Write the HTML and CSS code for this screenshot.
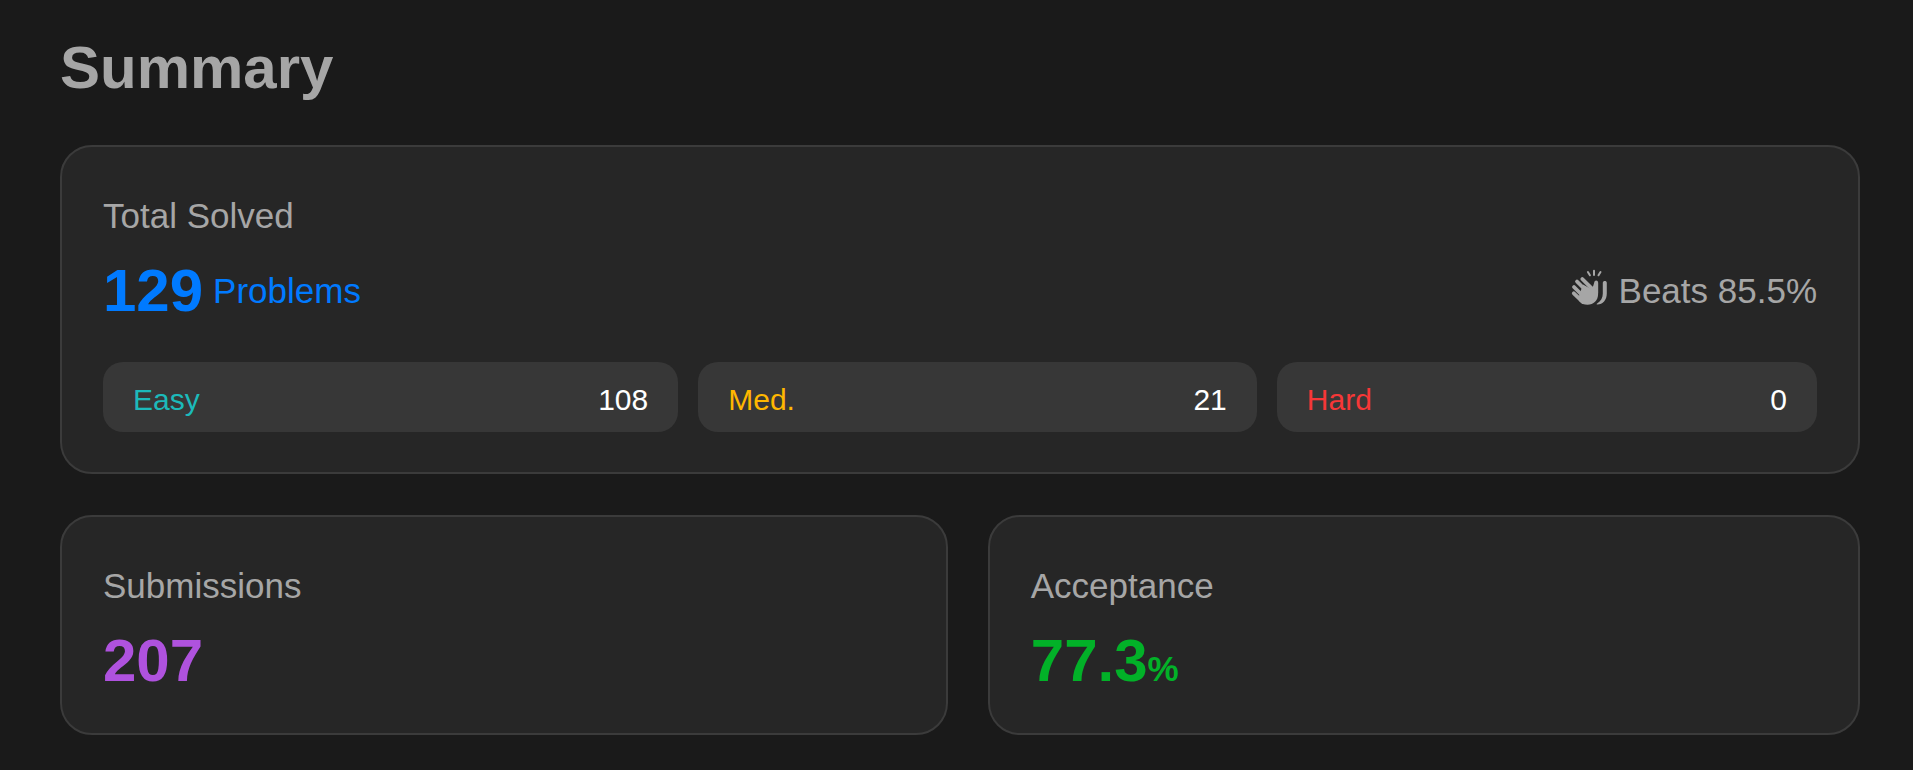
FILE: index.html
```html
<!DOCTYPE html>
<html lang="en">
<head>
<meta charset="utf-8">
<title>Summary</title>
<link rel="stylesheet" href="styles.css">
</head>
<body>
<main class="page">
  <h1 class="title">Summary</h1>
  <section class="card">
    <h2 class="label">Total Solved</h2>
    <div class="total">
      <p class="value solved">129 <span class="unit">Problems</span></p>
      <p class="beats">
        <svg class="clap" viewBox="0 0 40 44" aria-hidden="true">
          <g fill="none" stroke="currentColor" stroke-linecap="round">
            <path stroke-width="2" d="M25 1.800v4.200M18.900 3l2 3.300M31.500 3l-2 3.300"/>
            <path stroke-width="3.800" d="M13.300 10L24 20.700M8 12.500L19 23.500M5 18L16 29M4.800 24.300L14 33M27.200 13.500V24"/>
          </g>
          <path fill="currentColor" d="M14 15.500l9 5 2.300-7h3.800V25c0 6.500-4.500 10.800-10.600 10.800-3.600 0-6-1.300-8-3.300l-1.500-2.500 3-9z"/>
          <path fill="currentColor" d="M33.800 14c0-2.600 4-2.600 4 0v10.500c0 6.500-4 11-9.500 11-.8 0-.8-.6-.2-1 3.800-2.400 5.700-5.500 5.700-10z"/>
        </svg>
        <span>Beats 85.5%</span>
      </p>
    </div>
    <dl class="levels">
      <div class="level"><dt class="easy">Easy</dt><dd>108</dd></div>
      <div class="level"><dt class="medium">Med.</dt><dd>21</dd></div>
      <div class="level"><dt class="hard">Hard</dt><dd>0</dd></div>
    </dl>
  </section>
  <div class="row">
    <section class="card">
      <h2 class="label">Submissions</h2>
      <p class="value submissions">207</p>
    </section>
    <section class="card">
      <h2 class="label">Acceptance</h2>
      <p class="value acceptance">77.3<span class="percent">%</span></p>
    </section>
  </div>
</main>
</body>
</html>
```

FILE: styles.css
```css
* {
  box-sizing: border-box;
}

body {
  margin: 0;
  background: #1a1a1a;
  color: #a6a6a6;
  font-family: "Liberation Sans", Arial, sans-serif;
}

h1, h2, p, dl, dd {
  margin: 0;
}

.page {
  display: flex;
  flex-direction: column;
  gap: 41px;
  padding: 32px 53px 35px 60px;
}

.title {
  font-size: 60px;
  line-height: 72px;
}

.card {
  padding: 40px 41px;
  background: #262626;
  border: 2px solid #3b3b3b;
  border-radius: 32px;
}

.label {
  margin-bottom: 14px;
  font-size: 35px;
  font-weight: 400;
  line-height: 58px;
}

.total {
  display: flex;
  flex-wrap: wrap;
  align-items: center;
  justify-content: space-between;
  margin-bottom: 39px;
}

.value {
  font-size: 60px;
  font-weight: 700;
  line-height: 64px;
}

.solved {
  display: flex;
  align-items: center;
  gap: 10px;
  color: #007aff;
}

.unit {
  font-size: 35px;
  font-weight: 400;
}

.beats {
  display: flex;
  align-items: center;
  gap: 10px;
  font-size: 35px;
}

.clap {
  width: 40px;
  height: 44px;
}

.levels {
  display: flex;
  flex-wrap: wrap;
  gap: 20px;
}

.level {
  display: flex;
  flex: 1 1 auto;
  justify-content: space-between;
  padding: 6px 30px 0;
  background: #373737;
  border-radius: 20px;
  font-size: 30px;
  line-height: 64px;
}

.level dd {
  color: #fff;
}

.easy {
  color: #1cbaba;
}

.medium {
  color: #ffb700;
}

.hard {
  color: #f63737;
}

.row {
  display: flex;
  flex-wrap: wrap;
  gap: 40px;
}

.row .card {
  flex: 1 1 auto;
}

.submissions {
  color: #af52de;
}

.acceptance {
  color: #02b128;
}

.percent {
  font-size: 35px;
  line-height: 1;
}
```
